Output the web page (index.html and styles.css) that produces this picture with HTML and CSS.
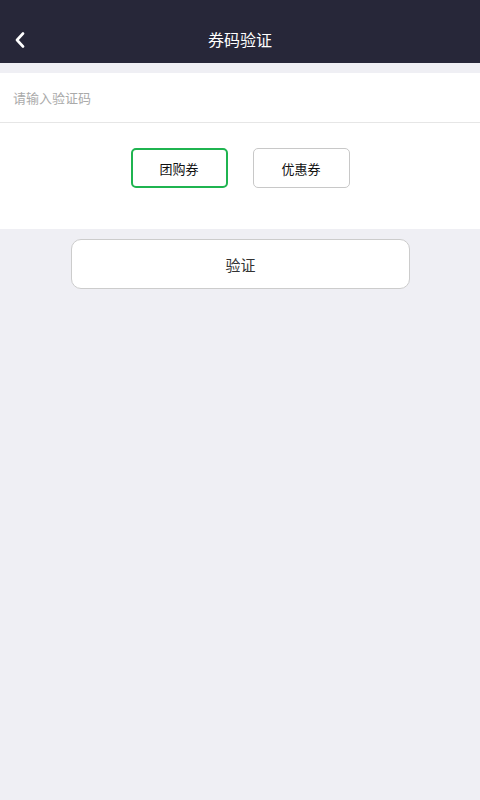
FILE: index.html
```html
<!DOCTYPE html>
<html lang="zh-CN">
<head>
  <meta charset="UTF-8">
  <meta name="viewport" content="width=device-width, initial-scale=1.0">
  <title>券码验证</title>
  <link rel="stylesheet" href="styles.css">
</head>
<body>
  <div class="header">
    <a class="back" href="#">
      <svg width="12" height="16" viewBox="0 0 12 16"><path d="M9 1.5 L3 8 L9 14.5" fill="none" stroke="#fff" stroke-width="2.6" stroke-linecap="round" stroke-linejoin="round"/></svg>
    </a>
    <h1>券码验证</h1>
  </div>

  <div class="panel">
    <div class="input-row">
      <input type="text" placeholder="请输入验证码">
    </div>
    <div class="types">
      <button class="type active">团购券</button>
      <button class="type">优惠券</button>
    </div>
  </div>

  <div class="actions">
    <button class="verify">验证</button>
  </div>
</body>
</html>
```

FILE: styles.css
```css
body {
  font-family: "Noto Sans CJK SC", "Noto Sans", sans-serif;
  margin: 0;
  background: #efeff4;
  width: 480px;
  min-height: 800px;
}

.header {
  height: 63px;
  background: #272739;
  display: flex;
  align-items: flex-end;
  justify-content: center;
  position: relative;
}

.header h1 {
  margin: 0;
  height: 42px;
  line-height: 36px;
  font-size: 16px;
  font-weight: normal;
  color: #fff;
}

.back {
  position: absolute;
  left: 14px;
  top: 32px;
  display: block;
  width: 12px;
  height: 16px;
}

.back svg {
  display: block;
}

.panel {
  margin-top: 10px;
  background: #fff;
  padding-bottom: 41px;
}

.input-row {
  height: 49px;
  border-bottom: 1px solid #e6e6e6;
  display: flex;
  align-items: center;
  padding: 0 13px 1px;
  box-sizing: border-box;
  height: 50px;
}

.input-row input {
  border: none;
  outline: none;
  width: 100%;
  font-family: inherit;
  font-size: 13px;
  color: #333;
  padding: 0;
}

.input-row input::placeholder {
  color: #aaa;
}

.types {
  display: flex;
  justify-content: center;
  gap: 25px;
  padding-top: 25px;
}

.type {
  width: 97px;
  height: 40px;
  background: #fff;
  border: 1px solid #c8c8c8;
  border-radius: 5px;
  font-family: inherit;
  font-size: 13px;
  color: #111;
  padding: 0;
}

.type.active {
  border: 2px solid #1fb450;
}

.actions {
  padding: 10px 70px 0 71px;
}

.verify {
  width: 100%;
  height: 50px;
  background: #fff;
  border: 1px solid #cccccc;
  border-radius: 10px;
  font-family: inherit;
  font-size: 15px;
  color: #333;
}
```
